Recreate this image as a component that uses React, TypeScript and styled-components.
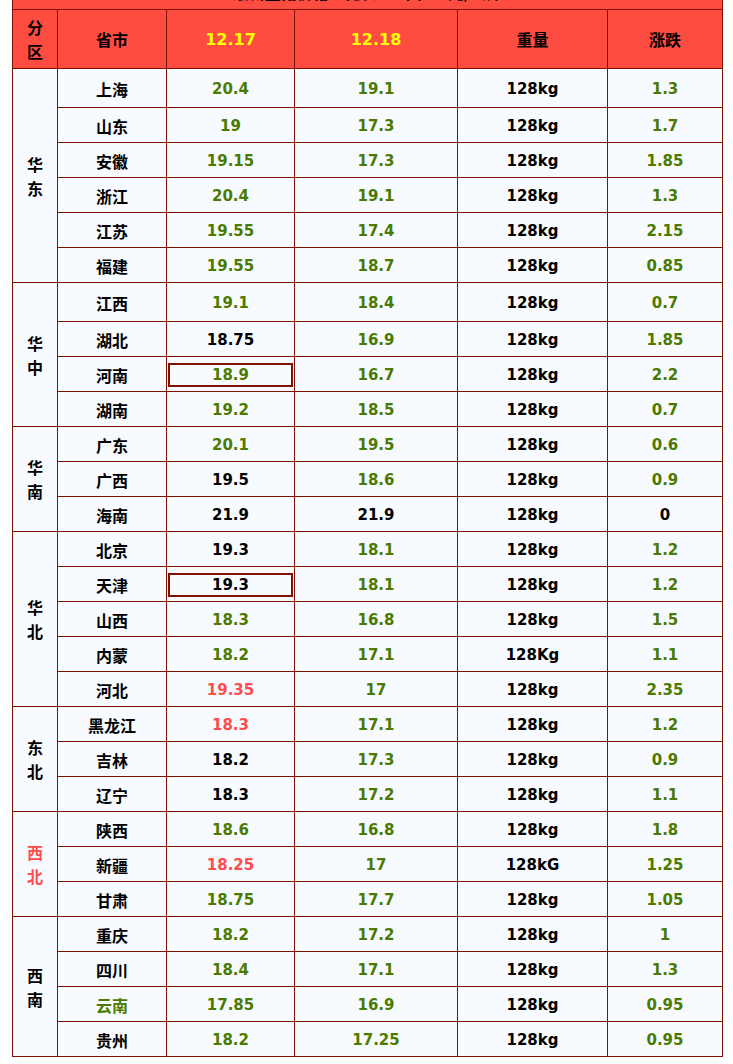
import React from "react"
import styled, { createGlobalStyle } from "styled-components"

const GlobalStyle = createGlobalStyle`
	html, body {
		margin: 0;
		padding: 0;
		background: #ffffff;
		overflow: hidden;
	}
	body {
		font-family: "DejaVu Sans", "Noto Sans CJK SC", sans-serif;
	}
`

const BORDER = "#7f1100"
const GREEN = "#4b7a00"
const RED = "#ff4c4c"
const BLACK = "#000000"

const Page = styled.div`
	padding: 0 11px 0 12px;
	margin-top: -26px;
`

const Table = styled.table`
	width: 710px;
	table-layout: fixed;
	border-collapse: collapse;
	border: 1px solid ${BORDER};
`

const TitleCell = styled.th`
	height: 34px;
	background: #ff4c41;
	border: 1px solid ${BORDER};
	font-size: 16px;
	font-weight: bold;
	color: #000;
	font-family: "Noto Sans CJK SC", sans-serif;
	padding: 0;
`

const HeadCell = styled.th<{ $date?: boolean }>`
	height: 58px;
	background: #ff4c41;
	border: 1px solid ${BORDER};
	font-size: 16px;
	font-weight: bold;
	color: ${(p) => (p.$date ? "#ffff00" : "#000")};
	padding: 0;
	text-align: center;
`

const Stack = styled.span<{ $color?: string }>`
	display: inline-block;
	width: 1em;
	line-height: 24px;
	word-break: break-all;
	font-family: "Noto Sans CJK SC", sans-serif;
	font-size: 16px;
	font-weight: bold;
	color: ${(p) => p.$color || "#000"};
`

const Row = styled.tr<{ $tall?: boolean }>`
	height: ${(p) => (p.$tall ? 39 : 35)}px;
`

const RegionCell = styled.td`
	background: #f7faff;
	border: 1px solid ${BORDER};
	text-align: center;
	vertical-align: middle;
	padding: 0;
`

const Cell = styled.td<{ $color?: string; $cjk?: boolean }>`
	background: #f7faff;
	border: 1px solid ${BORDER};
	text-align: center;
	vertical-align: middle;
	padding: 1px 1px 0;
	font-size: ${(p) => (p.$cjk ? 16 : 15)}px;
	font-weight: bold;
	color: ${(p) => p.$color || BLACK};
	font-family: ${(p) =>
		p.$cjk ? `"Noto Sans CJK SC", sans-serif` : `"DejaVu Sans", "Noto Sans CJK SC", sans-serif`};
	white-space: nowrap;
`

const Boxed = styled.div`
	height: 20px;
	line-height: 20px;
	border: 2px solid ${BORDER};
`

type Price = { v: string; c?: string }
type Item = {
	name: string
	nameColor?: string
	d17: Price
	d18: Price
	weight?: string
	diff: Price
	boxed?: boolean
	tall?: boolean
}
type Region = { label: string; color?: string; items: Item[] }

const g = (v: string): Price => ({ v, c: GREEN })
const k = (v: string): Price => ({ v, c: BLACK })
const r = (v: string): Price => ({ v, c: RED })

const regions: Region[] = [
	{
		label: "华东",
		items: [
			{ name: "上海", d17: g("20.4"), d18: g("19.1"), diff: g("1.3"), tall: true },
			{ name: "山东", d17: g("19"), d18: g("17.3"), diff: g("1.7") },
			{ name: "安徽", d17: g("19.15"), d18: g("17.3"), diff: g("1.85") },
			{ name: "浙江", d17: g("20.4"), d18: g("19.1"), diff: g("1.3") },
			{ name: "江苏", d17: g("19.55"), d18: g("17.4"), diff: g("2.15") },
			{ name: "福建", d17: g("19.55"), d18: g("18.7"), diff: g("0.85") },
		],
	},
	{
		label: "华中",
		items: [
			{ name: "江西", d17: g("19.1"), d18: g("18.4"), diff: g("0.7"), tall: true },
			{ name: "湖北", d17: k("18.75"), d18: g("16.9"), diff: g("1.85") },
			{ name: "河南", d17: g("18.9"), d18: g("16.7"), diff: g("2.2"), boxed: true },
			{ name: "湖南", d17: g("19.2"), d18: g("18.5"), diff: g("0.7") },
		],
	},
	{
		label: "华南",
		items: [
			{ name: "广东", d17: g("20.1"), d18: g("19.5"), diff: g("0.6") },
			{ name: "广西", d17: k("19.5"), d18: g("18.6"), diff: g("0.9") },
			{ name: "海南", d17: k("21.9"), d18: k("21.9"), diff: k("0") },
		],
	},
	{
		label: "华北",
		items: [
			{ name: "北京", d17: k("19.3"), d18: g("18.1"), diff: g("1.2") },
			{ name: "天津", d17: k("19.3"), d18: g("18.1"), diff: g("1.2"), boxed: true },
			{ name: "山西", d17: g("18.3"), d18: g("16.8"), diff: g("1.5") },
			{ name: "内蒙", d17: g("18.2"), d18: g("17.1"), weight: "128Kg", diff: g("1.1") },
			{ name: "河北", d17: r("19.35"), d18: g("17"), diff: g("2.35") },
		],
	},
	{
		label: "东北",
		items: [
			{ name: "黑龙江", d17: r("18.3"), d18: g("17.1"), diff: g("1.2") },
			{ name: "吉林", d17: k("18.2"), d18: g("17.3"), diff: g("0.9") },
			{ name: "辽宁", d17: k("18.3"), d18: g("17.2"), diff: g("1.1") },
		],
	},
	{
		label: "西北",
		color: RED,
		items: [
			{ name: "陕西", d17: g("18.6"), d18: g("16.8"), diff: g("1.8") },
			{ name: "新疆", d17: r("18.25"), d18: g("17"), weight: "128kG", diff: g("1.25") },
			{ name: "甘肃", d17: g("18.75"), d18: g("17.7"), diff: g("1.05") },
		],
	},
	{
		label: "西南",
		items: [
			{ name: "重庆", d17: g("18.2"), d18: g("17.2"), diff: g("1") },
			{ name: "四川", d17: g("18.4"), d18: g("17.1"), diff: g("1.3") },
			{ name: "云南", nameColor: GREEN, d17: g("17.85"), d18: g("16.9"), diff: g("0.95") },
			{ name: "贵州", d17: g("18.2"), d18: g("17.25"), diff: g("0.95") },
		],
	},
]

export default function App() {
	return (
		<>
			<GlobalStyle />
			<Page>
				<Table>
					<colgroup>
						<col style={{ width: 45 }} />
						<col style={{ width: 109 }} />
						<col style={{ width: 128 }} />
						<col style={{ width: 163 }} />
						<col style={{ width: 150 }} />
						<col style={{ width: 115 }} />
					</colgroup>
					<thead>
						<tr>
							<TitleCell colSpan={6}>最新生猪价格一览表 · 单位：元/公斤</TitleCell>
						</tr>
						<tr>
							<HeadCell>
								<Stack>分区</Stack>
							</HeadCell>
							<HeadCell>省市</HeadCell>
							<HeadCell $date>12.17</HeadCell>
							<HeadCell $date>12.18</HeadCell>
							<HeadCell>重量</HeadCell>
							<HeadCell>涨跌</HeadCell>
						</tr>
					</thead>
					<tbody>
						{regions.map((reg) =>
							reg.items.map((it, i) => (
								<Row key={reg.label + it.name} $tall={it.tall}>
									{i === 0 && (
										<RegionCell rowSpan={reg.items.length}>
											<Stack $color={reg.color}>{reg.label}</Stack>
										</RegionCell>
									)}
									<Cell $cjk $color={it.nameColor}>{it.name}</Cell>
									<Cell $color={it.d17.c}>
										{it.boxed ? <Boxed>{it.d17.v}</Boxed> : it.d17.v}
									</Cell>
									<Cell $color={it.d18.c}>{it.d18.v}</Cell>
									<Cell>{it.weight || "128kg"}</Cell>
									<Cell $color={it.diff.c}>{it.diff.v}</Cell>
								</Row>
							))
						)}
					</tbody>
				</Table>
			</Page>
		</>
	)
}
